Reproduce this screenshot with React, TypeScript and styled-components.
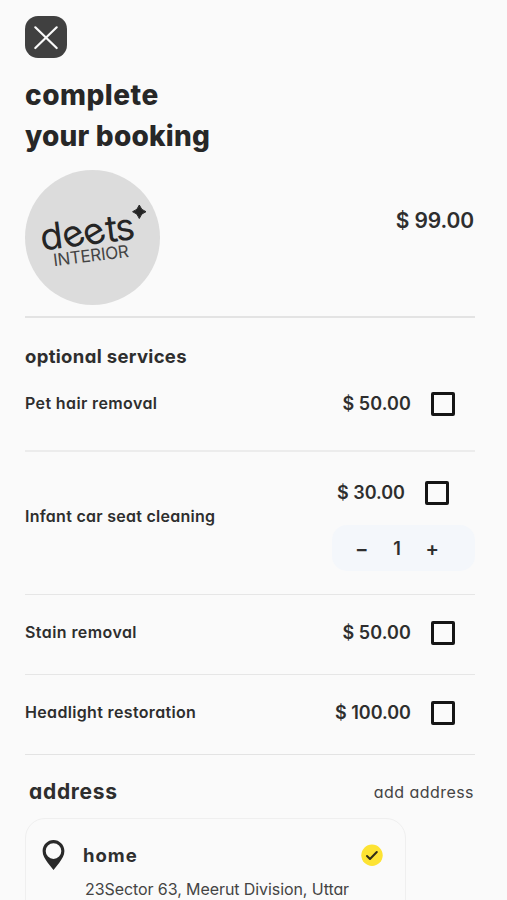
import React from "react";
import styled, { createGlobalStyle } from "styled-components";

const GlobalStyle = createGlobalStyle`
  * { box-sizing: border-box; }
  body {
    margin: 0;
    background: #fafafa;
    color: #272727;
    font-family: Inter, "Noto Sans", sans-serif;
    font-feature-settings: "cv11" 1;
    overflow: hidden;
  }
`;

const Page = styled.main`
  width: 507px;
  height: 900px;
  overflow: hidden;
  padding: 16px 32px 0 25px;
  display: flex;
  flex-direction: column;
`;

const Label = styled.span<{ $size: number; $weight?: number; $track?: number; $color?: string }>`
  font-size: ${(p) => p.$size}px;
  font-weight: ${(p) => p.$weight ?? 600};
  letter-spacing: ${(p) => p.$track ?? 0}px;
  color: ${(p) => p.$color ?? "#2e2e2e"};
  line-height: 24px;
  white-space: nowrap;
`;

const CloseButton = styled.button`
  width: 42px;
  height: 42px;
  flex: none;
  padding: 0;
  border: 0;
  border-radius: 13px;
  background: #404040;
  display: grid;
  place-items: center;
`;

const Title = styled.h1`
  margin: 17px 0 0;
  font-size: 28px;
  font-weight: 800;
  line-height: 41px;
  height: 82px;
  display: flex;
  flex-direction: column;
  white-space: nowrap;
`;

const TitleLine = styled.span<{ $track: number }>`
  letter-spacing: ${(p) => p.$track}px;
`;

const Summary = styled.section`
  margin-top: 13px;
  height: 148px;
  flex: none;
  width: 450px;
  display: flex;
  justify-content: space-between;
  border-bottom: 2px solid #e3e3e3;
`;

const Total = styled.div`
  padding: 39px 1px 0 0;
`;

const SectionTitle = styled.h2`
  margin: 26px 0 0;
  height: 24px;
  line-height: 24px;
  display: flex;
`;

const Row = styled.div<{ $height: number; $pad: number; $line: string; $thick?: number }>`
  width: 450px;
  height: ${(p) => p.$height}px;
  padding-top: ${(p) => p.$pad}px;
  flex: none;
  display: flex;
  justify-content: space-between;
  align-items: flex-start;
  border-bottom: ${(p) => p.$thick ?? 1}px solid ${(p) => p.$line};
`;

const Name = styled.div<{ $drop?: number }>`
  padding-top: ${(p) => p.$drop ?? 0}px;
  display: flex;
`;

const PriceGroup = styled.div<{ $right: number }>`
  display: flex;
  align-items: flex-start;
  justify-content: flex-end;
  gap: 20px;
  height: 25px;
  padding: 1px ${(p) => p.$right}px 0 0;
`;

const Checkbox = styled.span`
  width: 24px;
  height: 24px;
  border: 3px solid #151515;
  border-radius: 2px;
`;

const Options = styled.div`
  display: flex;
  flex-direction: column;
`;

const Stepper = styled.div`
  margin-top: 20px;
  width: 143px;
  height: 46px;
  padding: 1px 36px 0 23px;
  border-radius: 15px;
  background: #f4f7fb;
  display: flex;
  align-items: center;
  justify-content: space-between;
`;

const AddressHead = styled.div`
  width: 450px;
  margin-top: 25px;
  height: 24px;
  padding: 0 1px 0 4px;
  display: flex;
  justify-content: space-between;
`;

const Card = styled.section`
  margin-top: 14px;
  width: 381px;
  height: 160px;
  flex: none;
  border: 1px solid #efefef;
  border-radius: 20px;
  padding: 20px 22px 0 16px;
`;

const CardTop = styled.div`
  height: 32px;
  display: flex;
  align-items: center;
`;

const HomeLabel = styled.div`
  flex: 1;
  display: flex;
  padding-left: 17px;
`;

const AddressLine = styled.div`
  margin: 6px 0 0 43px;
  display: flex;
`;

const CloseIcon = () => (
  <svg width="42" height="42" viewBox="0 0 42 42" fill="none" stroke="#fafafa" strokeWidth="2.2" strokeLinecap="round">
    <path d="M10.3 11.3 31.7 32M31.7 11.3 10.3 32" />
  </svg>
);

const Logo = () => (
  <svg width="135" height="135" viewBox="0 0 135 135">
    <circle cx="67.5" cy="67.5" r="67.5" fill="#dcdcdc" />
    <g transform="translate(17 80.500) rotate(-7)" fontFamily="Inter, sans-serif" fill="#252525" textAnchor="middle">
      <g fontSize="37">
        <text x="11" y="0">d</text>
        <text x="33" y="0" transform="rotate(-24 33 -10)">e</text>
        <text x="54" y="0" transform="rotate(-24 54 -10)">e</text>
        <text x="71.500" y="0">t</text>
        <text x="85" y="0">s</text>
      </g>
      <text x="48" y="17" fontSize="17" textLength="76" lengthAdjust="spacing" fill="#444">INTERIOR</text>
    </g>
    <path d="M114.300 35 Q115.800 40.200 121 41.700 Q115.800 43.200 114.300 48.500 Q112.800 43.200 107.600 41.700 Q112.800 40.200 114.300 35Z" fill="#252525" stroke="#252525" />
  </svg>
);

const PinIcon = () => (
  <svg width="24" height="30" viewBox="0 0 24 30">
    <path
      fill="#292929"
      fillRule="evenodd"
      d="M11.500 0C5.500 0 .6 4.900.6 11.100c0 4.500 2.300 7.600 5.100 11.600L11.500 30l5.800-7.300c2.800-4 5.100-7.100 5.100-11.600C22.400 4.900 17.500 0 11.500 0Zm0 3.300a7.800 7.800 0 1 1 0 15.600 7.800 7.800 0 0 1 0-15.600Z"
    />
  </svg>
);

const CheckBadge = () => (
  <svg width="22" height="22" viewBox="0 0 22 22" fill="none">
    <circle cx="11" cy="11.2" r="10.7" fill="#fde333" />
    <path d="m6 12 3 3 6.800-7" stroke="#302d18" strokeWidth="2" strokeLinecap="round" strokeLinejoin="round" />
  </svg>
);

const Price = ({ value, track = 0 }: { value: string; track?: number }) => (
  <Label $size={18} $track={track}>{value}</Label>
);

export default function App() {
  return (
    <>
      <GlobalStyle />
      <Page>
        <CloseButton aria-label="Close"><CloseIcon /></CloseButton>
        <Title>
          <TitleLine $track={0.5}>complete</TitleLine>
          <TitleLine $track={0.2}>your booking</TitleLine>
        </Title>
        <Summary>
          <Logo />
          <Total><Label $size={21} $track={-0.1}>$ 99.00</Label></Total>
        </Summary>
        <SectionTitle><Label $size={18.5} $weight={700} $track={0.33}>optional services</Label></SectionTitle>

        <Row $height={84} $pad={23} $line="#ececec" $thick={2}>
          <Name><Label $size={16} $track={0.38}>Pet hair removal</Label></Name>
          <PriceGroup $right={20}><Price value="$ 50.00" track={0.1} /><Checkbox /></PriceGroup>
        </Row>
        <Row $height={143} $pad={28} $line="#e6e6e6">
          <Name $drop={24}><Label $size={16} $track={0.27}>Infant car seat cleaning</Label></Name>
          <Options>
            <PriceGroup $right={26}><Price value="$ 30.00" /><Checkbox /></PriceGroup>
            <Stepper>
              <Label $size={20}>−</Label>
              <Label $size={18}>1</Label>
              <Label $size={20}>+</Label>
            </Stepper>
          </Options>
        </Row>
        <Row $height={80} $pad={25} $line="#e6e6e6">
          <Name><Label $size={16} $track={0.42}>Stain removal</Label></Name>
          <PriceGroup $right={20}><Price value="$ 50.00" track={0.1} /><Checkbox /></PriceGroup>
        </Row>
        <Row $height={80} $pad={25} $line="#e3e3e3">
          <Name><Label $size={16} $track={0.34}>Headlight restoration</Label></Name>
          <PriceGroup $right={20}><Price value="$ 100.00" /><Checkbox /></PriceGroup>
        </Row>

        <AddressHead>
          <Label $size={21} $weight={700} $track={0.7}>address</Label>
          <Label $size={16} $weight={400} $track={0.45} $color="#444">add address</Label>
        </AddressHead>
        <Card>
          <CardTop>
            <PinIcon />
            <HomeLabel><Label $size={18.5} $weight={700} $track={1}>home</Label></HomeLabel>
            <CheckBadge />
          </CardTop>
          <AddressLine><Label $size={16} $weight={400} $track={-0.08} $color="#444">23Sector 63, Meerut Division, Uttar</Label></AddressLine>
        </Card>
      </Page>
    </>
  );
}
